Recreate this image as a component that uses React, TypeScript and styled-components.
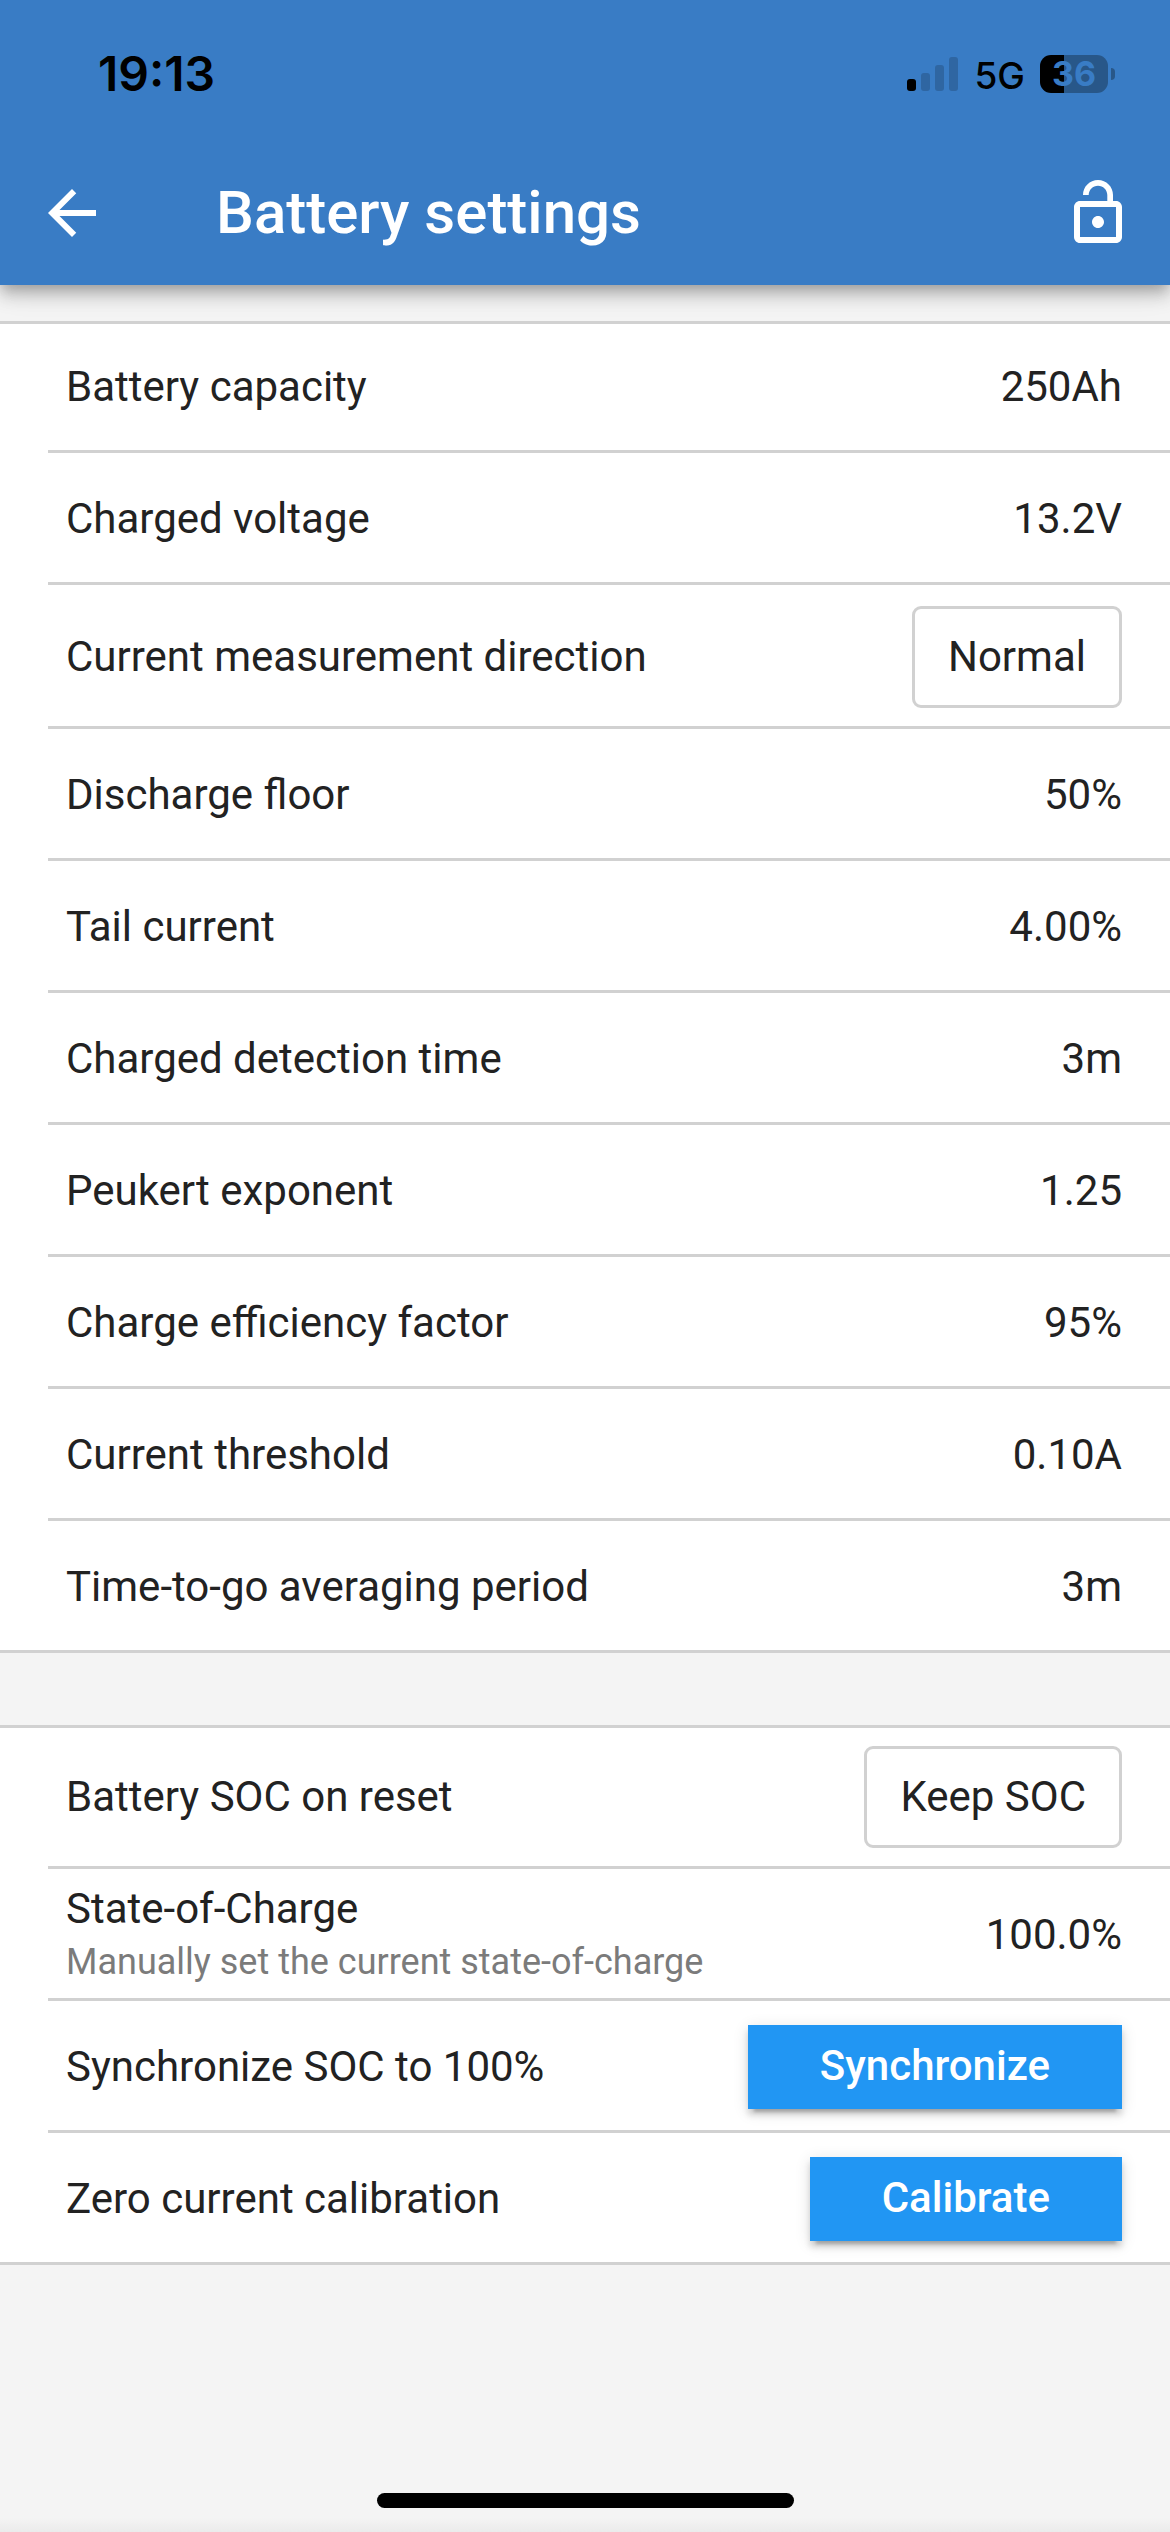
import React from "react";
import styled, { createGlobalStyle } from "styled-components";

const color = {
  primary: "#397cc5",
  accent: "#2196f3",
  page: "#f4f4f4",
  line: "#d1d1d1",
  text: "#222222",
  muted: "#7b7b7b",
};

const GlobalStyle = createGlobalStyle`
  *, *::before, *::after { box-sizing: border-box; }
  html, body, #root { height: 100%; }
  body {
    margin: 0;
    background: ${color.page};
    color: ${color.text};
    font-family: Roboto, "Liberation Sans", sans-serif;
    font-size: 42px;
    line-height: 48px;
  }
  button { font: inherit; color: inherit; cursor: pointer; }
`;

const Screen = styled.div`
  display: flex;
  flex-direction: column;
  min-height: 100%;
  background: ${color.page};
`;

const Header = styled.header`
  background: ${color.primary};
  box-shadow:
    0 6px 12px -3px rgba(0, 0, 0, 0.2),
    0 12px 15px 0 rgba(0, 0, 0, 0.14),
    0 3px 30px 0 rgba(0, 0, 0, 0.12);
`;

const StatusBar = styled.div`
  display: flex;
  align-items: center;
  justify-content: space-between;
  height: 141px;
  padding: 7px 55px 0 98px;
  color: #000;
  font-family: Inter, "Liberation Sans", sans-serif;
`;

const Clock = styled.time`
  font-size: 48px;
  font-weight: 600;
`;

const StatusIcons = styled.div`
  display: flex;
  align-items: center;
`;

const Network = styled.span`
  margin: 4px 15px 0 16px;
  font-size: 37px;
  font-weight: 500;
`;

const BatteryBody = styled.span<{ $level: number }>`
  display: flex;
  align-items: center;
  justify-content: center;
  width: 68px;
  height: 38px;
  border-radius: 11px;
  background: linear-gradient(
    to right,
    #000 ${(p) => p.$level}%,
    #285789 ${(p) => p.$level}%
  );
  color: ${color.primary};
  font-size: 34px;
  font-weight: 700;
  line-height: 38px;
`;

const BatteryTip = styled.span`
  width: 4px;
  height: 12px;
  margin-left: 3px;
  border-radius: 0 4px 4px 0;
  background: #285789;
`;

const Toolbar = styled.div`
  display: flex;
  align-items: center;
  height: 144px;
  padding: 0 36px;
  color: #fff;
`;

const Title = styled.h1`
  flex: 1;
  margin: 0 0 0 108px;
  font-size: 60px;
  font-weight: 500;
  line-height: 72px;
`;

const IconButton = styled.button`
  display: flex;
  padding: 0;
  border: 0;
  background: none;

  svg {
    width: 72px;
    height: 72px;
    fill: currentColor;
  }
`;

const Content = styled.main`
  display: flex;
  flex: 1;
  flex-direction: column;
  gap: 72px;
  padding-top: 36px;
`;

const Section = styled.ul`
  margin: 0;
  padding: 0 0 0 48px;
  list-style: none;
  background: #fff;
  box-shadow: inset 0 3px 0 ${color.line}, inset 0 -3px 0 ${color.line};
`;

const Row = styled.li<{ $tall?: boolean }>`
  display: flex;
  align-items: center;
  justify-content: space-between;
  min-height: ${(p) => (p.$tall ? 144 : 132)}px;
  padding: 3px 48px 0 18px;
  border-bottom: 3px solid ${color.line};
`;

const Label = styled.div`
  display: flex;
  flex-direction: column;
  gap: 5px;
`;

const Hint = styled.small`
  color: ${color.muted};
  font-size: 36px;
`;

const Choice = styled.button`
  height: 102px;
  padding: 0 33px;
  border: 3px solid ${color.line};
  border-radius: 9px;
  background: #fff;
`;

const Action = styled.button`
  height: 84px;
  padding: 0 72px 3px;
  border: 0;
  background: ${color.accent};
  color: #fff;
  font-weight: 500;
  box-shadow:
    0 9px 3px -6px rgba(0, 0, 0, 0.2),
    0 6px 6px 0 rgba(0, 0, 0, 0.14),
    0 3px 15px 0 rgba(0, 0, 0, 0.12);
`;

const Footer = styled.footer`
  display: flex;
  justify-content: center;
  padding-bottom: 24px;
  background: linear-gradient(to top, #ebebeb, ${color.page} 14px);
`;

const HomeIndicator = styled.span`
  width: 417px;
  height: 15px;
  border-radius: 8px;
  background: #000;
`;

type Setting = {
  label: string;
  hint?: string;
  value: string;
  kind?: "choice" | "action";
};

const monitorSettings: Setting[] = [
  { label: "Battery capacity", value: "250Ah" },
  { label: "Charged voltage", value: "13.2V" },
  { label: "Current measurement direction", value: "Normal", kind: "choice" },
  { label: "Discharge floor", value: "50%" },
  { label: "Tail current", value: "4.00%" },
  { label: "Charged detection time", value: "3m" },
  { label: "Peukert exponent", value: "1.25" },
  { label: "Charge efficiency factor", value: "95%" },
  { label: "Current threshold", value: "0.10A" },
  { label: "Time-to-go averaging period", value: "3m" },
];

const chargeSettings: Setting[] = [
  { label: "Battery SOC on reset", value: "Keep SOC", kind: "choice" },
  {
    label: "State-of-Charge",
    hint: "Manually set the current state-of-charge",
    value: "100.0%",
  },
  { label: "Synchronize SOC to 100%", value: "Synchronize", kind: "action" },
  { label: "Zero current calibration", value: "Calibrate", kind: "action" },
];

function SettingRow({ label, hint, value, kind }: Setting) {
  const id = label.toLowerCase().replace(/[^a-z0-9]+/g, "-");
  return (
    <Row $tall={kind === "choice"}>
      <Label id={id}>
        <span>{label}</span>
        {hint && <Hint>{hint}</Hint>}
      </Label>
      {kind === "choice" && (
        <Choice type="button" aria-haspopup="dialog" aria-describedby={id}>
          {value}
        </Choice>
      )}
      {kind === "action" && (
        <Action type="button" aria-describedby={id}>
          {value}
        </Action>
      )}
      {!kind && <span>{value}</span>}
    </Row>
  );
}

function SettingList({ items }: { items: Setting[] }) {
  return (
    <Section>
      {items.map((item) => (
        <SettingRow key={item.label} {...item} />
      ))}
    </Section>
  );
}

function SignalBars() {
  return (
    <svg width="51" height="34" viewBox="0 0 51 34" aria-hidden="true">
      <rect x="0" y="22" width="9" height="12" rx="3" />
      <g fill="#2f66a2">
        <rect x="14" y="16" width="9" height="18" rx="3" />
        <rect x="28" y="8" width="9" height="26" rx="3" />
        <rect x="42" y="0" width="9" height="34" rx="3" />
      </g>
    </svg>
  );
}

export default function App() {
  return (
    <>
      <GlobalStyle />
      <Screen>
        <Header>
          <StatusBar>
            <Clock>19:13</Clock>
            <StatusIcons>
              <SignalBars />
              <Network>5G</Network>
              <BatteryBody $level={36}>36</BatteryBody>
              <BatteryTip />
            </StatusIcons>
          </StatusBar>
          <Toolbar>
            <IconButton type="button" aria-label="Back">
              <svg viewBox="0 0 24 24" aria-hidden="true">
                <path d="M20 11H7.83l5.59-5.59L12 4l-8 8 8 8 1.41-1.41L7.83 13H20v-2z" />
              </svg>
            </IconButton>
            <Title>Battery settings</Title>
            <IconButton type="button" aria-label="Lock settings">
              <svg viewBox="0 0 24 24" aria-hidden="true">
                <path d="M12 17c1.1 0 2-.9 2-2s-.9-2-2-2-2 .9-2 2 .9 2 2 2zm6-9h-1V6c0-2.76-2.24-5-5-5S7 3.24 7 6h1.9c0-1.71 1.39-3.1 3.1-3.1 1.71 0 3.1 1.39 3.1 3.1v2H6c-1.1 0-2 .9-2 2v10c0 1.1.9 2 2 2h12c1.1 0 2-.9 2-2V10c0-1.1-.9-2-2-2zm0 12H6V10h12v10z" />
              </svg>
            </IconButton>
          </Toolbar>
        </Header>
        <Content>
          <SettingList items={monitorSettings} />
          <SettingList items={chargeSettings} />
        </Content>
        <Footer>
          <HomeIndicator />
        </Footer>
      </Screen>
    </>
  );
}
